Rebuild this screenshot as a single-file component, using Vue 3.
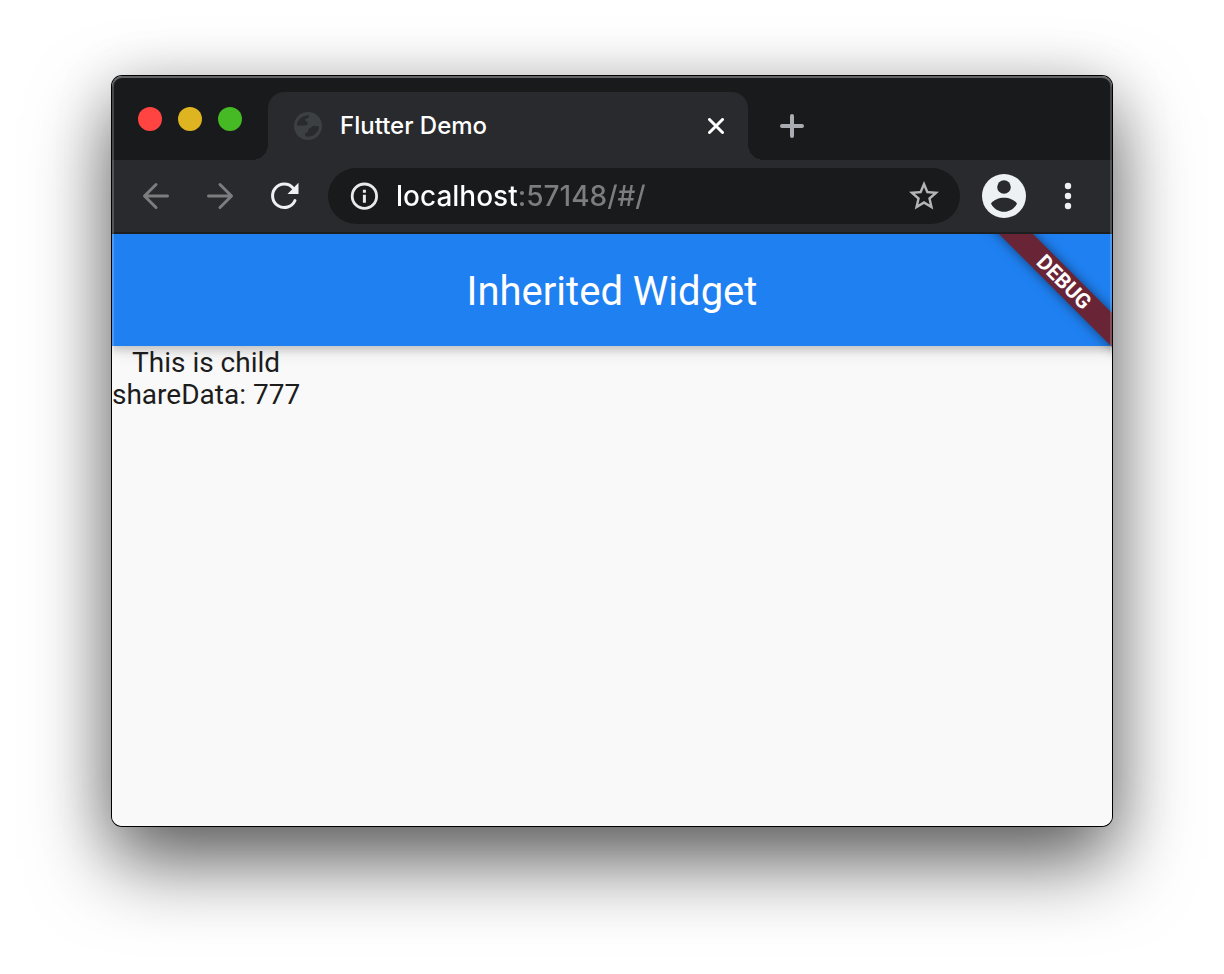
<script setup>
import { ref } from 'vue'

const address = ref('localhost:57148/#/')
const lines = ['This is child', 'shareData: 777']
const lights = [
  { name: 'Close window', tone: 'red' },
  { name: 'Minimize window', tone: 'yellow' },
  { name: 'Zoom window', tone: 'green' },
]
</script>

<template>
  <div class="desktop">
    <div class="window">
      <header class="strip">
        <div class="lights">
          <button v-for="l in lights" :key="l.tone" class="light" :class="l.tone" :aria-label="l.name"></button>
        </div>
        <div class="tab">
          <svg class="favicon" viewBox="0 0 28 28" aria-hidden="true">
            <circle cx="14" cy="14" r="14" fill="#3c4043" />
            <path d="M3 13.500C3 8 8 3.300 15 3.200V4C15 6 13.500 6.500 12 6.500C10.500 7 11 9 12.500 9.500C14.500 10 14 13.500 11.500 13.500Z" fill="#292a2d" />
            <path d="M25 14C25 20 20 25 13.500 24.800C11.500 24.600 10.500 23.500 11 22C11.300 20.500 13 21 14 19.500C14.500 18 14 16.500 16 16C18 15.500 17.500 14.500 19 14C20.500 13.500 22 14.500 25 14Z" fill="#292a2d" />
          </svg>
          <span class="tab-title">Flutter Demo</span>
          <button class="plain close" aria-label="Close tab">
            <svg viewBox="0 0 16 16"><path d="M1.500 1.500L14.500 14.500M14.500 1.500L1.500 14.500" fill="none" stroke="#fff" stroke-width="3" stroke-linecap="round" /></svg>
          </button>
        </div>
        <button class="plain new-tab" aria-label="New tab">
          <svg viewBox="0 0 24 24"><path d="M12 2V22M2 12H22" fill="none" stroke="#a9adb2" stroke-width="4" stroke-linecap="round" /></svg>
        </button>
      </header>

      <nav class="toolbar">
        <div class="nav-buttons">
          <button class="plain nav" aria-label="Back">
            <svg viewBox="0 0 32 32"><path d="M27.500 16H5M16 4.500L4.500 16L16 27.500" fill="none" stroke="#7c7d7e" stroke-width="3" stroke-linecap="round" stroke-linejoin="round" /></svg>
          </button>
          <button class="plain nav" aria-label="Forward">
            <svg viewBox="0 0 32 32"><path d="M4.500 16H27M16 4.500L27.500 16L16 27.500" fill="none" stroke="#7c7d7e" stroke-width="3" stroke-linecap="round" stroke-linejoin="round" /></svg>
          </button>
          <button class="plain nav" aria-label="Reload">
            <svg viewBox="0 0 32 32">
              <path d="M27 20.500A11.700 11.700 0 1 1 25 8" fill="none" stroke="#eef1f3" stroke-width="3" stroke-linecap="round" />
              <path d="M30.500 2.700V14H19.500Z" fill="#eef1f3" />
            </svg>
          </button>
        </div>
        <div class="omnibox">
          <button class="plain info" aria-label="Site information">
            <svg viewBox="0 0 28 28">
              <circle cx="14.400" cy="14.200" r="12.200" fill="none" stroke="#e8eaed" stroke-width="2.800" />
              <path d="M12.900 7.700H15.900V10.700H12.900ZM12.900 12.700H15.900V20.700H12.900Z" fill="#e8eaed" />
            </svg>
          </button>
          <input v-model="address" class="address" type="text" aria-label="Address" spellcheck="false" />
          <button class="plain star" aria-label="Bookmark this page">
            <svg viewBox="0 0 24 24"><path fill="#b4b5b6" d="M22 9.240l-7.190-.620L12 2 9.190 8.630 2 9.240l5.460 4.730L5.820 21 12 17.270 18.180 21l-1.630-7.030L22 9.240zM12 15.400l-3.760 2.270 1-4.280-3.320-2.880 4.380-.380L12 6.100l1.710 4.040 4.380.380-3.320 2.880 1 4.280L12 15.400z" /></svg>
          </button>
        </div>
        <button class="plain profile" aria-label="Profile">
          <svg viewBox="0 0 44 44">
            <circle cx="22" cy="22" r="22" fill="#eef1f3" />
            <circle cx="22" cy="13" r="6.800" fill="#292a2d" />
            <path d="M9 29.500C12 25.600 17 23.800 22 23.800S32 25.600 35 29.500C32.500 35 27 37.800 22 37.800S11.500 35 9 29.500Z" fill="#292a2d" />
          </svg>
        </button>
        <button class="plain menu" aria-label="Menu">
          <svg viewBox="0 0 8 28"><g fill="#eef1f3"><circle cx="4" cy="4" r="3.200" /><circle cx="4" cy="14" r="3.200" /><circle cx="4" cy="24" r="3.200" /></g></svg>
        </button>
      </nav>

      <main class="page">
        <div class="app-bar"><h1>Inherited Widget</h1></div>
        <div class="content">
          <p v-for="line in lines" :key="line">{{ line }}</p>
        </div>
        <div class="ribbon">DEBUG</div>
      </main>
    </div>
  </div>
</template>

<style>
body {
  background: #fff;
}
</style>

<style scoped>
.desktop {
  box-sizing: border-box;
  min-height: 100vh;
  padding: 76px 112px 148px;
  display: flex;
  overflow: hidden;
  font-family: Inter, "Liberation Sans", sans-serif;
}
.window {
  position: relative;
  flex: 1;
  min-width: 0;
  display: flex;
  flex-direction: column;
  border-radius: 10px;
  background: #fafafa;
  box-shadow: 0 0 0 1px #000, 0 36px 80px rgba(0, 0, 0, 0.6), 0 8px 60px rgba(0, 0, 0, 0.16);
}
.window::after {
  content: "";
  position: absolute;
  inset: 0;
  border-radius: 10px;
  box-shadow: inset 0 0 0 2px rgba(255, 255, 255, 0.2), inset 0 2px 0 rgba(255, 255, 255, 0.16);
  pointer-events: none;
  z-index: 3;
}
svg {
  display: block;
  width: 100%;
}
.plain {
  border: 0;
  padding: 0;
  background: none;
  flex: none;
}
.strip {
  height: 84px;
  box-sizing: border-box;
  padding: 16px 26px 0;
  display: flex;
  background: #191a1b;
  border-radius: 10px 10px 0 0;
}
.lights {
  display: flex;
  gap: 16px;
  padding-top: 15px;
  margin-right: 26px;
}
.light {
  width: 24px;
  height: 24px;
  border: 0;
  padding: 0;
  border-radius: 50%;
}
.red { background: #ff4442; }
.yellow { background: #dfb421; }
.green { background: #46ba25; }
.tab {
  position: relative;
  box-sizing: border-box;
  flex: 0 1 480px;
  min-width: 0;
  display: flex;
  align-items: center;
  padding: 0 24px 0 26px;
  background: #292a2d;
  border-radius: 16px 16px 0 0;
}
.tab::before,
.tab::after {
  content: "";
  position: absolute;
  bottom: 0;
  width: 16px;
  height: 16px;
}
.tab::before {
  right: 100%;
  background: radial-gradient(circle at 0 0, transparent 16px, #292a2d 16px);
}
.tab::after {
  left: 100%;
  background: radial-gradient(circle at 100% 0, transparent 16px, #292a2d 16px);
}
.favicon {
  width: 28px;
  flex: none;
}
.tab-title {
  flex: 1;
  margin-left: 18px;
  color: #fff;
  font-size: 24px;
  font-weight: 450;
  line-height: 32px;
  white-space: nowrap;
}
.close { width: 16px; }
.new-tab {
  width: 24px;
  margin-left: 32px;
}
.toolbar {
  height: 74px;
  box-sizing: border-box;
  padding: 8px 40px 0 28px;
  display: flex;
  align-items: flex-start;
  background: #292a2d;
  border-bottom: 2px solid #1d1e20;
}
.toolbar > * { height: 56px; }
.nav-buttons {
  display: flex;
  align-items: center;
  gap: 32px;
}
.nav { width: 32px; }
.omnibox {
  flex: 1;
  min-width: 0;
  box-sizing: border-box;
  margin-left: 28px;
  padding: 0 18px 0 22px;
  display: flex;
  align-items: center;
  border-radius: 28px;
  background: #191a1b;
}
.info { width: 28px; }
.address {
  flex: 1;
  min-width: 0;
  margin-left: 18px;
  padding: 0;
  border: 0;
  outline: 0;
  font: 450 28px/36px Inter, "Liberation Sans", sans-serif;
  color: transparent;
  caret-color: #fff;
  background: linear-gradient(90deg, #fff 121px, #7c7d7e 121px);
  background-clip: text;
  -webkit-background-clip: text;
}
.star { width: 36px; }
.profile {
  width: 44px;
  margin-left: 22px;
}
.menu {
  width: 8px;
  margin-left: 38px;
}
.page {
  position: relative;
  flex: 1;
  overflow: hidden;
  border-radius: 0 0 10px 10px;
  background: #f9f9f9;
  font-family: Roboto, sans-serif;
}
.app-bar {
  position: relative;
  box-sizing: border-box;
  display: flex;
  align-items: center;
  justify-content: center;
  height: 112px;
  padding-top: 4px;
  background: #1f80f1;
  box-shadow: 0 4px 8px rgba(0, 0, 0, 0.16), 0 2px 20px rgba(0, 0, 0, 0.12);
}
h1 {
  margin: 0;
  color: #fff;
  font-size: 40px;
  font-weight: 400;
  line-height: 48px;
}
.content {
  position: relative;
  width: max-content;
  padding-top: 1px;
  text-align: center;
}
.content p {
  margin: 0;
  color: #1c1c1c;
  font-size: 28px;
  line-height: 32px;
}
.ribbon {
  position: absolute;
  top: 36px;
  right: -52px;
  width: 200px;
  height: 24px;
  transform: rotate(45deg);
  background: #692436;
  box-shadow: 0 0 12px rgba(0, 0, 0, 0.5);
  color: #fff;
  font-size: 21px;
  font-weight: 700;
  line-height: 25px;
  text-align: center;
}
</style>
